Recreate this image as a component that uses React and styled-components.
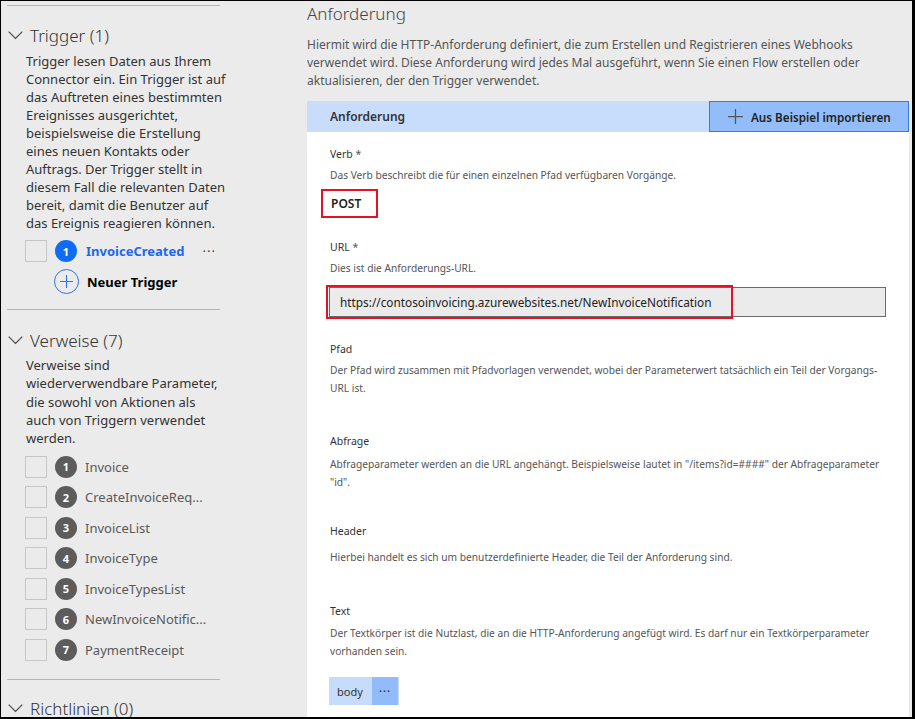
import React from "react";
import styled, { createGlobalStyle } from "styled-components";

const Global = createGlobalStyle`
  html, body { margin: 0; padding: 0; background: #ebebeb; }
  body { font-family: "Noto Sans", "Open Sans", sans-serif; }
  * { box-sizing: border-box; }
`;

const Frame = styled.div`
  width: 915px;
  height: 719px;
  border-left: 1px solid #000;
  border-top: 1px solid #000;
  border-right: 3px solid #000;
  border-bottom: 2px solid #000;
  background: #ebebeb;
  display: grid;
  grid-template-columns: 306px 602px;
  overflow: hidden;
`;

const Side = styled.aside`
  padding-left: 6px;
  overflow: hidden;
`;

const Rule = styled.div`
  width: 213px;
  height: 1px;
  background: #b5b5b5;
  margin-top: ${(p) => p.$top}px;
`;

const SectionHead = styled.div`
  display: flex;
  align-items: center;
  gap: 7px;
  height: 26px;
  margin-top: ${(p) => p.$top}px;
  padding-left: 1px;
  font-size: 17px;
  font-weight: 300;
  color: #333;
  white-space: nowrap;
`;

const SideText = styled.p`
  margin: ${(p) => p.$top}px 0 0 19px;
  font-size: 13px;
  line-height: ${(p) => p.$lh || 18}px;
  color: #333;
  white-space: nowrap;
`;

const ItemList = styled.div`
  margin-top: ${(p) => p.$top}px;
  padding-left: 18px;
  display: flex;
  flex-direction: column;
`;

const Item = styled.div`
  display: flex;
  align-items: center;
  height: ${(p) => p.$h || 30.5}px;
`;

const Check = styled.span`
  width: 22px;
  height: 22px;
  border: 1px solid #c6c6c6;
  flex: none;
`;

const Badge = styled.span`
  width: 22px;
  height: 22px;
  border-radius: 50%;
  margin-left: 8px;
  background: ${(p) => p.$bg};
  color: #fff;
  font-size: 11px;
  font-weight: 700;
  display: flex;
  align-items: center;
  justify-content: center;
  flex: none;
`;

const AddCircle = styled.span`
  width: 25px;
  height: 25px;
  border-radius: 50%;
  margin-left: 29px;
  border: 1px solid #2b74f0;
  display: flex;
  align-items: center;
  justify-content: center;
  flex: none;
`;

const ItemName = styled.span`
  margin-left: ${(p) => p.$ml || 8}px;
  font-size: 13px;
  color: ${(p) => p.$color || "#595959"};
  font-weight: ${(p) => (p.$bold ? 700 : 400)};
  white-space: nowrap;
`;

const More = styled.span`
  margin-left: 18px;
  font-size: 13px;
  color: #444;
  letter-spacing: 1px;
`;

const Main = styled.main`
  display: flex;
  flex-direction: column;
  overflow: hidden;
`;

const Title = styled.h1`
  margin: 1px 0 0;
  font-size: 17px;
  line-height: 24px;
  font-weight: 300;
  color: #444;
`;

const Intro = styled.p`
  margin: 10px 0 0;
  font-size: 12px;
  line-height: 18px;
  color: #555;
  white-space: nowrap;
`;

const Bar = styled.div`
  margin-top: 11px;
  height: 31px;
  background: #c8ddfb;
  display: flex;
  align-items: center;
  justify-content: space-between;
`;

const BarTitle = styled.span`
  margin-left: 23px;
  font-size: 12px;
  font-weight: 600;
  color: #333;
`;

const ImportButton = styled.button`
  height: 31px;
  width: 200px;
  border: 1px solid #2b7cf0;
  background: #93bdf8;
  display: flex;
  align-items: center;
  gap: 8px;
  padding: 0 0 0 18px;
  font-family: inherit;
  font-size: 11.7px;
  font-weight: 600;
  color: #222;
`;

const Card = styled.section`
  flex: 1;
  background: #fff;
  padding: 12px 0 0 23px;
  display: flex;
  flex-direction: column;
  align-items: flex-start;
`;

const Label = styled.div`
  margin-top: ${(p) => p.$top || 0}px;
  font-size: 10.5px;
  line-height: 20px;
  color: #333;
`;

const Req = styled.span`
  color: #555;
`;

const Desc = styled.div`
  margin-top: ${(p) => p.$top || 2}px;
  font-size: 10.2px;
  line-height: 18px;
  color: #555;
  white-space: nowrap;
`;

const PostBox = styled.div`
  margin: 5px 0 0 -9px;
  width: 57px;
  height: 29px;
  border: 2px solid #e81123;
  display: flex;
  align-items: center;
  padding-left: 8px;
  font-size: 12px;
  font-weight: 600;
  color: #222;
`;

const UrlField = styled.div`
  position: relative;
  margin: 10px 0 0 -1px;
  width: 557px;
  height: 30px;
  background: #ebebeb;
  border: 1px solid #6b6b6b;
  display: flex;
  align-items: center;
  padding-left: 10px;
  font-size: 11.8px;
  color: #222;
  white-space: nowrap;
`;

const Highlight = styled.span`
  position: absolute;
  left: -4px;
  top: -3px;
  width: 407px;
  height: 34px;
  border: 2px solid #e81123;
  pointer-events: none;
`;

const Chip = styled.div`
  margin: 17px 0 0 -1px;
  height: 28px;
  display: flex;
  background: #c7dcfa;
`;

const ChipName = styled.span`
  padding: 0 9px 0 8px;
  display: flex;
  align-items: center;
  font-size: 11px;
  color: #333;
`;

const ChipMore = styled.span`
  width: 27px;
  background: #91bbf9;
  display: flex;
  align-items: center;
  justify-content: center;
  font-size: 13px;
  letter-spacing: 0.5px;
  color: #333;
  border-right: 1px solid #c7dcfa;
`;

const Chevron = () => (
  <svg width="15" height="9" viewBox="0 0 15 9">
    <path d="M0.7 0.7 L7.5 7.5 L14.3 0.7" fill="none" stroke="#444" strokeWidth="1.1" />
  </svg>
);

const Plus = ({ size = 12, color = "#2b74f0", w = 1 }) => (
  <svg width={size} height={size} viewBox="0 0 12 12">
    <path d="M6 0 V12 M0 6 H12" stroke={color} strokeWidth={w} />
  </svg>
);

const refs = [
  "Invoice",
  "CreateInvoiceReq...",
  "InvoiceList",
  "InvoiceType",
  "InvoiceTypesList",
  "NewInvoiceNotific...",
  "PaymentReceipt",
];

const lines = (arr) =>
  arr.map((l, i) => (
    <React.Fragment key={i}>
      {l}
      {i < arr.length - 1 && <br />}
    </React.Fragment>
  ));

export default function App() {
  return (
    <>
      <Global />
      <Frame>
        <Side>
          <Rule $top={4} />
          <SectionHead $top={16}>
            <Chevron />
            Trigger (1)
          </SectionHead>
          <SideText $top={4}>
            {lines([
              "Trigger lesen Daten aus Ihrem",
              "Connector ein. Ein Trigger ist auf",
              "das Auftreten eines bestimmten",
              "Ereignisses ausgerichtet,",
              "beispielsweise die Erstellung",
              "eines neuen Kontakts oder",
              "Auftrags. Der Trigger stellt in",
              "diesem Fall die relevanten Daten",
              "bereit, damit die Benutzer auf",
              "das Ereignis reagieren können.",
            ])}
          </SideText>
          <ItemList $top={4}>
            <Item $h={30}>
              <Check />
              <Badge $bg="#0f6cf5">1</Badge>
              <ItemName $bold $color="#1f66ee" $ml={9}>
                InvoiceCreated
              </ItemName>
              <More>···</More>
            </Item>
            <Item $h={31}>
              <AddCircle>
                <Plus size={13} />
              </AddCircle>
              <ItemName $bold $color="#000" $ml={8}>
                Neuer Trigger
              </ItemName>
            </Item>
          </ItemList>
          <Rule $top={12} />
          <SectionHead $top={17}>
            <Chevron />
            Verweise (7)
          </SectionHead>
          <SideText $top={3} $lh={18.25}>
            {lines([
              "Verweise sind",
              "wiederverwendbare Parameter,",
              "die sowohl von Aktionen als",
              "auch von Triggern verwendet",
              "werden.",
            ])}
          </SideText>
          <ItemList $top={4}>
            {refs.map((r, i) => (
              <Item key={r}>
                <Check />
                <Badge $bg="#5c5c5c">{i + 1}</Badge>
                <ItemName>{r}</ItemName>
              </Item>
            ))}
          </ItemList>
          <Rule $top={14} />
          <SectionHead $top={16}>
            <Chevron />
            Richtlinien (0)
          </SectionHead>
        </Side>

        <Main>
          <Title>Anforderung</Title>
          <Intro>
            {lines([
              "Hiermit wird die HTTP-Anforderung definiert, die zum Erstellen und Registrieren eines Webhooks",
              "verwendet wird. Diese Anforderung wird jedes Mal ausgeführt, wenn Sie einen Flow erstellen oder",
              "aktualisieren, der den Trigger verwendet.",
            ])}
          </Intro>
          <Bar>
            <BarTitle>Anforderung</BarTitle>
            <ImportButton>
              <Plus size={15} color="#555" />
              Aus Beispiel importieren
            </ImportButton>
          </Bar>
          <Card>
            <Label>
              Verb <Req>*</Req>
            </Label>
            <Desc>Das Verb beschreibt die für einen einzelnen Pfad verfügbaren Vorgänge.</Desc>
            <PostBox>POST</PostBox>

            <Label $top={19}>
              URL <Req>*</Req>
            </Label>
            <Desc>Dies ist die Anforderungs-URL.</Desc>
            <UrlField>
              https://contosoinvoicing.azurewebsites.net/NewInvoiceNotification
              <Highlight />
            </UrlField>

            <Label $top={22}>Pfad</Label>
            <Desc>
              {lines([
                "Der Pfad wird zusammen mit Pfadvorlagen verwendet, wobei der Parameterwert tatsächlich ein Teil der Vorgangs-",
                "URL ist.",
              ])}
            </Desc>

            <Label $top={34}>Abfrage</Label>
            <Desc $top={4}>
              {lines([
                "Abfrageparameter werden an die URL angehängt. Beispielsweise lautet in \"/items?id=####\" der Abfrageparameter",
                "\"id\".",
              ])}
            </Desc>

            <Label $top={30}>Header</Label>
            <Desc $top={7}>
              Hierbei handelt es sich um benutzerdefinierte Header, die Teil der Anforderung sind.
            </Desc>

            <Label $top={35}>Text</Label>
            <Desc $top={3}>
              {lines([
                "Der Textkörper ist die Nutzlast, die an die HTTP-Anforderung angefügt wird. Es darf nur ein Textkörperparameter",
                "vorhanden sein.",
              ])}
            </Desc>
            <Chip>
              <ChipName>body</ChipName>
              <ChipMore>···</ChipMore>
            </Chip>
          </Card>
        </Main>
      </Frame>
    </>
  );
}
